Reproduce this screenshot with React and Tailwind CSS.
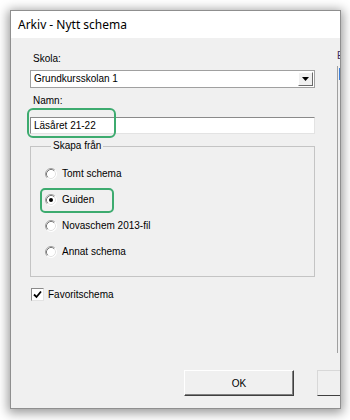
import React from "react";

const GREEN = "border-[#3dab6f]";

function Radio({ checked }) {
  return (
    <svg width="12" height="12" viewBox="0 0 12 12" className="shrink-0">
      <circle cx="6" cy="6" r="5.5" fill="#ffffff" />
      <path d="M2.11 9.89 A5.5 5.5 0 0 1 9.89 2.11" fill="none" stroke="#a0a0a0" strokeWidth="1" />
      <path d="M9.89 2.11 A5.5 5.5 0 0 1 2.11 9.89" fill="none" stroke="#ffffff" strokeWidth="1" />
      <path d="M2.82 9.18 A4.5 4.5 0 0 1 9.18 2.82" fill="none" stroke="#7a7a7a" strokeWidth="1" />
      <path d="M9.18 2.82 A4.5 4.5 0 0 1 2.82 9.18" fill="none" stroke="#e3e3e3" strokeWidth="1" />
      {checked && <circle cx="6" cy="6" r="2" fill="#000000" />}
    </svg>
  );
}

function RadioRow({ label, checked, highlight }) {
  return (
    <div className="relative flex h-[13px] items-center gap-[5px] leading-[13px]">
      <Radio checked={checked} />
      <span>{label}</span>
      {highlight && (
        <div className={`absolute left-[-5px] top-[-5px] h-[25px] w-[74px] rounded-[5px] border-2 ${GREEN}`} />
      )}
    </div>
  );
}

export default function App() {
  return (
    <div className="h-[420px] w-[350px] overflow-hidden bg-white pl-[10px] pt-[10px] font-['Liberation_Sans',Arial,sans-serif] text-[10px] text-black">
      <div className="flex h-[399px] w-[331px] flex-col overflow-hidden border border-[#8f8f8f] bg-[#f0f0f0] shadow-[0_2px_10px_2px_rgba(0,0,0,0.4)]">
        {/* Title bar */}
        <div className="flex h-[27px] shrink-0 items-center bg-white pl-[7px] font-['Noto_Sans',sans-serif] text-[12px] text-black">
          Arkiv - Nytt schema
        </div>

        {/* Body */}
        <div className="flex flex-1 flex-col pl-[19px] pt-[12px]">
          <div className="flex">
            {/* Left column */}
            <div className="flex w-[285px] shrink-0 flex-col pt-[3px]">
              <div className="h-[12px] pl-[3px] leading-[12px]">Skola:</div>
              <div className="mt-[5px] flex h-[18px] items-stretch border border-[#a0a0a0] bg-white">
                <div className="flex flex-1 items-center pl-[3px] leading-[12px]">Grundkursskolan 1</div>
                <div className="m-[1px] flex w-[15px] items-center justify-center border border-t-white border-l-white border-b-[#6a6a6a] border-r-[#6a6a6a] bg-[#f0f0f0]">
                  <svg width="7" height="4" viewBox="0 0 7 4">
                    <path d="M0 0 H7 L3.5 4 Z" fill="#000000" />
                  </svg>
                </div>
              </div>

              <div className="mt-[7px] h-[12px] pl-[3px] leading-[12px]">Namn:</div>
              <div className="relative mt-[10px] flex h-[17px] items-center border border-t-[#8a8a8a] border-l-[#8a8a8a] border-b-[#e3e3e3] border-r-[#e3e3e3] bg-white pl-[3px] leading-[12px]">
                Läsåret 21-22
                <div className={`absolute left-[-4px] top-[-10px] h-[30px] w-[89px] rounded-[6px] border-2 ${GREEN}`} />
              </div>

              <fieldset className="mt-[6px] h-[137px] border border-[#c4c4c4] pl-[14px] pt-[15px]">
                <legend className="ml-[6px] px-[2px] leading-[12px]">Skapa från</legend>
                <div className="flex flex-col gap-[13px]">
                  <RadioRow label="Tomt schema" />
                  <RadioRow label="Guiden" checked highlight />
                  <RadioRow label="Novaschem 2013-fil" />
                  <RadioRow label="Annat schema" />
                </div>
              </fieldset>

              <div className="mt-[11px] flex h-[13px] items-center gap-[4px] pl-[1px] leading-[13px]">
                <div className="flex h-[13px] w-[13px] items-center justify-center border border-t-[#8a8a8a] border-l-[#8a8a8a] border-b-[#e3e3e3] border-r-[#e3e3e3] bg-white">
                  <svg width="9" height="9" viewBox="0 0 9 9">
                    <path d="M1 4.5 L3.5 7 L8 1.5" fill="none" stroke="#000000" strokeWidth="1.8" />
                  </svg>
                </div>
                <span>Favoritschema</span>
              </div>
            </div>

            {/* Right (clipped) column */}
            <div className="ml-[22px] flex w-[120px] shrink-0 flex-col">
              <div className="h-[12px] leading-[12px] text-[#3a2a5a]">E</div>
              <div className="mt-[4px] h-[287px] border-l border-[#a0a0a0] pl-[1px] pt-[2px]">
                <div className="h-[12px] w-[60px] bg-[#3c7fd8]" />
              </div>
            </div>
          </div>

          {/* Buttons */}
          <div className="mt-[17px] flex">
            <button className="ml-[154px] flex h-[26px] w-[110px] shrink-0 items-center justify-center border border-t-white border-l-white border-b-[#404040] border-r-[#404040] bg-[#f0f0f0] text-[10px] shadow-[inset_-1px_-1px_0_#808080]">
              OK
            </button>
            <div className="ml-[23px] h-[26px] w-[90px] shrink-0 border border-t-[#d8d8d8] border-l-[#d8d8d8] border-b-[#404040] border-r-[#404040] bg-[#f0f0f0]" />
          </div>
        </div>
      </div>
    </div>
  );
}
